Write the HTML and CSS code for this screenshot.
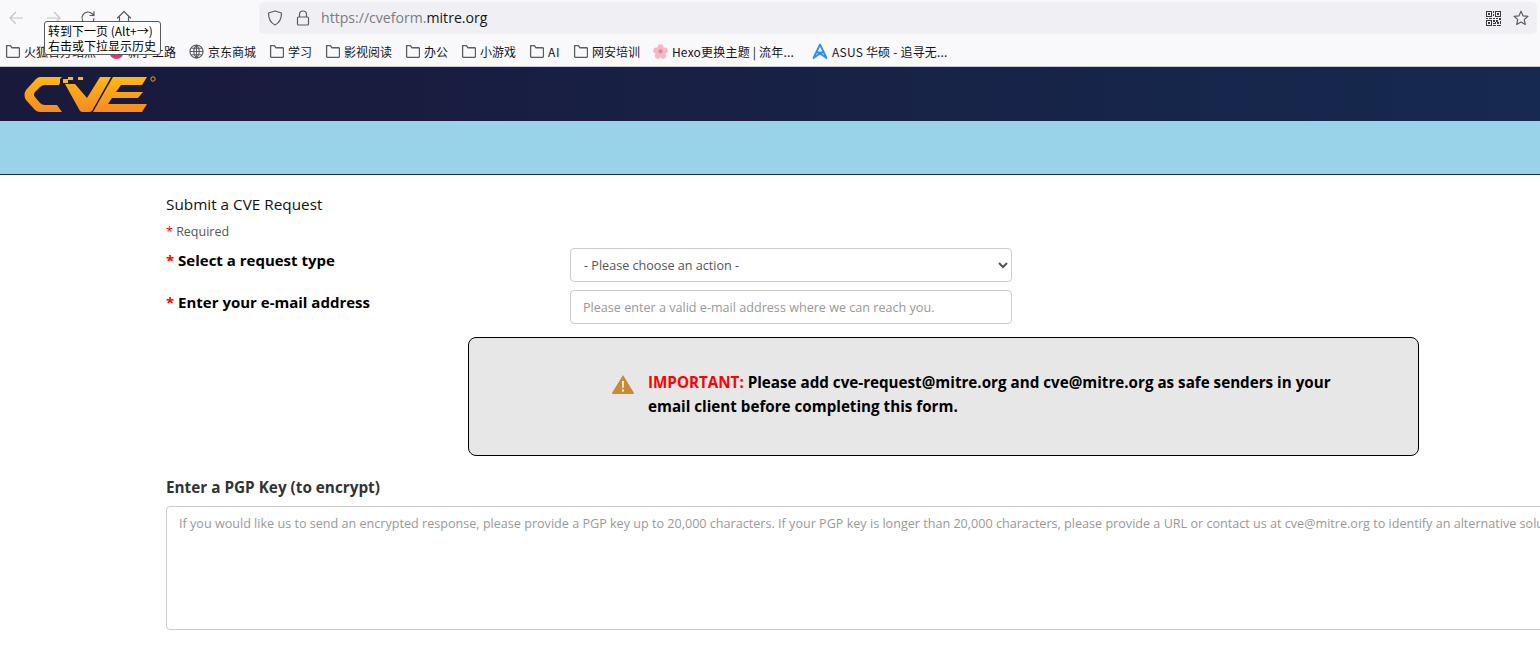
FILE: index.html
```html
<!DOCTYPE html>
<html lang="en">
<head>
<meta charset="utf-8">
<title>CVE Request</title>
<link rel="stylesheet" href="styles.css">
</head>
<body>
<div class="chrome">
  <div class="toolbar">
    <div class="nav">
      <svg class="nav-icon" viewBox="0 0 16 16"><path class="stroke-faint" d="M14.500 8H2M7.500 2.500 2 8l5.500 5.500"/></svg>
      <svg class="nav-icon nav-forward" viewBox="0 0 16 16"><path class="stroke-faint" d="M1.500 8H14M8.500 2.500 14 8l-5.500 5.500"/></svg>
      <svg class="nav-icon" viewBox="0 0 16 16"><path class="stroke" d="M14 8.500A6 6 0 1 1 12.200 3.700L14 5.500M14 1.500v4h-4"/></svg>
      <svg class="nav-icon" viewBox="0 0 16 16"><path class="stroke" d="M1.500 8 8 1.500 14.500 8M3.500 7v7h9V7"/></svg>
    </div>
    <div class="urlbar">
      <svg class="url-icon" viewBox="0 0 16 16"><path class="stroke" d="M8 1 14.500 3c0 6-1.500 9.500-6.500 12C3 12.500 1.500 9 1.500 3z"/></svg>
      <svg class="url-icon" viewBox="0 0 16 16"><path class="stroke" d="M4.500 7V4.500a3.500 3.500 0 0 1 7 0V7M3.500 7h9a1 1 0 0 1 1 1v6a1 1 0 0 1-1 1h-9a1 1 0 0 1-1-1V8a1 1 0 0 1 1-1z"/></svg>
      <span class="url"><span class="url-dim">https://cveform.</span>mitre.org</span>
      <svg class="qr" viewBox="0 0 15 15">
        <path class="qr-fill" d="M0 0h6v6H0zM1 1v4h4V1zM2 2h2v2H2zM9 0h6v6H9zM10 1v4h4V1zM11 2h2v2h-2zM0 9h6v6H0zM1 10v4h4v-4zM2 11h2v2H2zM7 0h1v2H7zM7 3h1v2H7zM7 7h2v1H7zM0 7h2v1H0zM3 7h3v1H3zM10 7h2v1h-2zM13 7h2v2h-2zM7 9h2v2H7zM10 9h2v2h-2zM9 11h1v2H9zM11 11h2v2h-2zM7 12h2v1H7zM7 14h3v1H7zM11 14h4v1h-4zM14 10h1v3h-1z"/>
      </svg>
      <svg class="star" viewBox="0 0 16 16"><path class="stroke" d="M8 1.200 10 5.800l5 .5-3.800 3.300 1.100 4.900L8 12l-4.300 2.500 1.100-4.900L1 6.300l5-.5z"/></svg>
    </div>
  </div>
  <div class="bookmarks">
    <div class="bm"><svg class="bm-icon" viewBox="0 0 14 14"><path class="folder" d="M1.500 1.500h3.500l1.500 2h6a1 1 0 0 1 1 1v7a1 1 0 0 1-1 1h-10a1 1 0 0 1-1-1v-9a1 1 0 0 1 1-1z"/></svg><span>火狐官方站点</span></div>
    <div class="bm"><svg class="bm-icon" viewBox="0 0 14 14"><circle class="pink" cx="7" cy="7" r="7"/></svg><span>新手上路</span></div>
    <div class="bm"><svg class="bm-icon" viewBox="0 0 16 16"><path class="stroke" d="M8 1a7 7 0 1 0 0 14A7 7 0 0 0 8 1zM1 8h14M2 4.500h12M2 11.500h12M8 1c-4 4-4 10 0 14M8 1c4 4 4 10 0 14M8 1v14"/></svg><span>京东商城</span></div>
    <div class="bm"><svg class="bm-icon" viewBox="0 0 14 14"><path class="folder" d="M1.500 1.500h3.500l1.500 2h6a1 1 0 0 1 1 1v7a1 1 0 0 1-1 1h-10a1 1 0 0 1-1-1v-9a1 1 0 0 1 1-1z"/></svg><span>学习</span></div>
    <div class="bm"><svg class="bm-icon" viewBox="0 0 14 14"><path class="folder" d="M1.500 1.500h3.500l1.500 2h6a1 1 0 0 1 1 1v7a1 1 0 0 1-1 1h-10a1 1 0 0 1-1-1v-9a1 1 0 0 1 1-1z"/></svg><span>影视阅读</span></div>
    <div class="bm"><svg class="bm-icon" viewBox="0 0 14 14"><path class="folder" d="M1.500 1.500h3.500l1.500 2h6a1 1 0 0 1 1 1v7a1 1 0 0 1-1 1h-10a1 1 0 0 1-1-1v-9a1 1 0 0 1 1-1z"/></svg><span>办公</span></div>
    <div class="bm"><svg class="bm-icon" viewBox="0 0 14 14"><path class="folder" d="M1.500 1.500h3.500l1.500 2h6a1 1 0 0 1 1 1v7a1 1 0 0 1-1 1h-10a1 1 0 0 1-1-1v-9a1 1 0 0 1 1-1z"/></svg><span>小游戏</span></div>
    <div class="bm bm-ai"><svg class="bm-icon" viewBox="0 0 14 14"><path class="folder" d="M1.500 1.500h3.500l1.500 2h6a1 1 0 0 1 1 1v7a1 1 0 0 1-1 1h-10a1 1 0 0 1-1-1v-9a1 1 0 0 1 1-1z"/></svg><span>AI</span></div>
    <div class="bm"><svg class="bm-icon" viewBox="0 0 14 14"><path class="folder" d="M1.500 1.500h3.500l1.500 2h6a1 1 0 0 1 1 1v7a1 1 0 0 1-1 1h-10a1 1 0 0 1-1-1v-9a1 1 0 0 1 1-1z"/></svg><span>网安培训</span></div>
    <div class="bm bm-wide"><svg class="bm-icon" viewBox="0 0 14 14"><g class="petal"><circle cx="7" cy="3" r="2.800"/><circle cx="3" cy="6" r="2.800"/><circle cx="11" cy="6" r="2.800"/><circle cx="4.500" cy="11" r="2.800"/><circle cx="9.500" cy="11" r="2.800"/></g><circle class="petal-core" cx="7" cy="7" r="2"/></svg><span>Hexo更换主题 | 流年...</span></div>
    <div class="bm bm-wide bm-asus"><svg class="asus" viewBox="0 0 16 16"><path class="asus-line" d="M8 1.500 1.500 15 8 10.500 14.500 15zM4.500 9.500h7"/></svg><span>ASUS 华硕 - 追寻无...</span></div>
  </div>
  <div class="tooltip">转到下一页 (Alt+→)<br>右击或下拉显示历史</div>
</div>

<header class="site-header">
  <svg class="logo" viewBox="0 0 136 38">
    <defs>
      <linearGradient id="logoGrad" gradientUnits="userSpaceOnUse" x1="0" y1="1" x2="0" y2="36">
        <stop offset="0" stop-color="#ffb815"/>
        <stop offset="1" stop-color="#f68a24"/>
      </linearGradient>
    </defs>
    <path fill="url(#logoGrad)" d="M16 1H38L36 3V7L35 9H21Q18 9 16 11L11 16Q9 18.500 11 21L16 27Q18 29 21 29H33L38 36H16Q13 36 11 34L2 24Q-1 19 2 14L12 3Q14 1 16 1Z"/>
    <path fill="url(#logoGrad)" d="M41 8H51L63 22 76 1H87L68 35Q67 36 65 36H59Q57 36 56 35Z"/>
    <path fill="url(#logoGrad)" d="M89 1H123L118 9H97L92 16H119L114 22H88L84 28H123L118 36H69Z"/>
    <path fill="#ffb815" d="M39 3h5v4h-5zM44 1h5v3h-5zM54 1h5v3h-5z"/>
    <circle class="logo-r" cx="129" cy="3" r="2.200"/>
  </svg>
</header>
<div class="band"></div>

<main class="form">
  <h1 class="title">Submit a CVE Request</h1>
  <p class="required"><span class="req">*</span> Required</p>
  <div class="row">
    <label class="label"><span class="req">*</span> Select a request type</label>
    <select class="control select"><option>- Please choose an action -</option></select>
  </div>
  <div class="row">
    <label class="label"><span class="req">*</span> Enter your e-mail address</label>
    <input class="control" type="text" placeholder="Please enter a valid e-mail address where we can reach you.">
  </div>
  <div class="notice">
    <svg class="warn" viewBox="0 0 22 19"><path class="warn-tri" d="M11 0 22 18a1 1 0 0 1-1 1H1a1 1 0 0 1-1-1z"/><path class="warn-mark" d="M10 6h2l-.4 7h-1.200zM10 14.500h2v2h-2z"/></svg>
    <p class="notice-text"><span class="important">IMPORTANT:</span> Please add cve-request@mitre.org and cve@mitre.org as safe senders in your email client before completing this form.</p>
  </div>
  <h2 class="pgp-label">Enter a PGP Key (to encrypt)</h2>
  <textarea class="pgp" placeholder="If you would like us to send an encrypted response, please provide a PGP key up to 20,000 characters. If your PGP key is longer than 20,000 characters, please provide a URL or contact us at cve@mitre.org to identify an alternative solution."></textarea>
</main>
</body>
</html>
```

FILE: styles.css
```css
* { box-sizing: border-box; }
html, body { margin: 0; padding: 0; height: 659px; overflow: hidden; background: #fff; }
body { font-family: "Open Sans", "Noto Sans CJK SC", sans-serif; color: #000; }

.chrome { position: relative; height: 67px; background: #f9f9fb; border-bottom: 1px solid #c9c9cd; font-family: "Noto Sans CJK SC", "Open Sans", sans-serif; }
.toolbar { display: flex; align-items: flex-start; height: 36px; padding: 2px 3px 0 8px; }
.nav { display: flex; gap: 20px; padding-top: 8px; width: 251px; }
.nav-icon { width: 16px; height: 16px; }
.nav-forward { margin: 0 -2px 0 2px; }
.stroke, .stroke-faint, .folder { fill: none; stroke: #5b5b66; stroke-width: 1.200; stroke-linejoin: round; stroke-linecap: round; }
.stroke-faint { stroke: #c4c4ca; }
.urlbar { flex: 1; display: flex; align-items: center; height: 32px; background: #f0f0f4; border-radius: 5px; padding: 0 8px; gap: 12px; }
.url-icon { width: 16px; height: 16px; }
.url { flex: 1; font-family: "Open Sans", sans-serif; font-size: 14.100px; color: #15141a; margin: -1px 0 0 -2px; }
.url-dim { color: #7b7a82; }
.qr { width: 15px; height: 15px; }
.qr-fill { fill: #3a3a42; fill-rule: evenodd; }
.star { width: 16px; height: 16px; }

.bookmarks { display: flex; align-items: center; gap: 13px; height: 30px; padding: 0 0 0 5px; font-size: 12px; color: #15141a; white-space: nowrap; }
.bm { display: flex; align-items: center; gap: 5px; }
.bm-icon { width: 15px; height: 15px; margin-right: -1px; }
.bm-ai { letter-spacing: .5px; }
.bm-wide { letter-spacing: .2px; }
.bm-asus { margin-left: 5px; }
.asus { width: 16px; height: 16px; margin-right: -1px; }
.asus-line { fill: none; stroke: #2f8cf5; stroke-width: 1.800; stroke-linejoin: round; }
.pink { fill: #ee2f6c; }
.petal { fill: #f7b6c7; }
.petal-core { fill: #ea7d9c; }

.tooltip { position: absolute; left: 44px; top: 21px; padding: 1px 4px 1px 3px; background: #fff; border: 1px solid #5a5a5a; border-radius: 3px; font-size: 12px; line-height: 15px; color: #000; white-space: nowrap; }

.site-header { height: 54px; padding: 9px 0 0 24px; background: linear-gradient(90deg, #19193b, #16294f); }
.logo { display: block; width: 136px; height: 38px; }
.logo-r { fill: none; stroke: #f59a23; stroke-width: 1; }
.band { height: 54px; background: #98d3ea; border-bottom: 1px solid #14264a; }

.form { padding: 18px 0 0 166px; }
.title { margin: 0; font-size: 15.300px; font-weight: 400; line-height: 22px; color: #111; }
.required { margin: 8px 0 0; font-size: 12.500px; line-height: 18px; color: #555; }
.req { color: #f00; }
.row { display: grid; grid-template-columns: 404px 442px; align-items: start; height: 34px; margin-bottom: 8px; }
.required + .row { margin-top: 7px; }
.label { font-size: 15px; font-weight: 700; line-height: 24px; color: #000; }
.control { width: 442px; height: 34px; padding: 0 12px; background: #fff; border: 1px solid #ccc; border-radius: 4px; font-family: "Open Sans", sans-serif; font-size: 12.600px; color: #555; outline: none; }
.select { padding-left: 9px; }
.control::placeholder { color: #999; opacity: 1; }
.notice { display: flex; align-items: flex-start; width: 951px; height: 119px; margin: 13px 0 0 302px; padding: 32px 85px 0 143px; background: #e7e7e7; border: 1px solid #000; border-radius: 8px; }
.warn { flex: none; width: 22px; height: 19px; margin: 5px 14px 0 0; }
.warn-tri { fill: #c98a35; }
.warn-mark { fill: #fff; }
.notice-text { margin: 0; font-size: 15.200px; font-weight: 700; line-height: 24px; color: #000; }
.important { color: #f00; }
.pgp-label { margin: 20px 0 0; font-size: 15.300px; font-weight: 700; line-height: 22px; color: #333; }
.pgp { display: block; width: 1600px; height: 124px; margin-top: 8px; padding: 8px 12px; border: 1px solid #ccc; border-radius: 4px; background: #fff; font-family: "Open Sans", sans-serif; font-size: 12.600px; line-height: 18px; resize: none; outline: none; }
.pgp::placeholder { color: #999; opacity: 1; }
```
